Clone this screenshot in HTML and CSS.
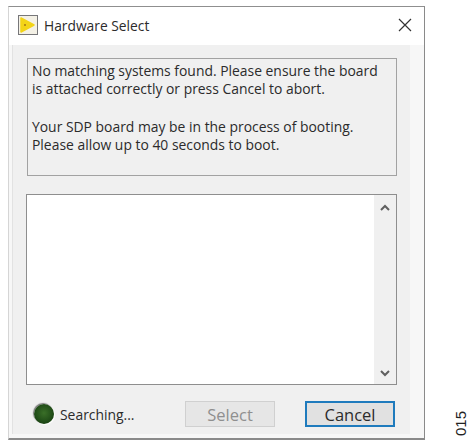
FILE: index.html
```html
<!DOCTYPE html>
<html lang="en">
  <head>
    <meta charset="UTF-8" />
    <title>Hardware Select</title>
    <link rel="stylesheet" href="styles.css">
  </head>
  <body>
    <div class="dialog">
      <div class="titlebar">
        <span class="app-icon">
          <svg width="20" height="20" viewBox="0 0 20 20">
            <rect x="0.5" y="0.5" width="19" height="19" fill="#f4f1e6" stroke="#77777a" />
            <path d="M3 3 L16 10 L3 17 Z" fill="#f3d417" stroke="#f3d417" stroke-linejoin="round" stroke-width="1.5" />
            <circle cx="7" cy="10" r="1" fill="#a5761a" />
          </svg>
        </span>
        <span class="title">Hardware Select</span>
        <svg class="close" width="14" height="14" viewBox="0 0 14 14">
          <path d="M1 1 L13 13 M13 1 L1 13" stroke="#333" stroke-width="1.2" fill="none" />
        </svg>
      </div>
      <div class="content">
        <div class="panel">
          <div class="message">
            <p>No matching systems found. Please ensure the board<br>is attached correctly or press Cancel to abort.</p>
            <p>Your SDP board may be in the process of booting.<br>Please allow up to 40 seconds to boot.</p>
          </div>
          <div class="listbox">
            <div class="list-items"></div>
            <div class="scrollbar">
              <svg width="10" height="8" viewBox="0 0 10 8">
                <path d="M1 6 L5 2 L9 6" stroke="#5f5f5f" stroke-width="2" fill="none" />
              </svg>
              <svg width="10" height="8" viewBox="0 0 10 8">
                <path d="M1 2 L5 6 L9 2" stroke="#5f5f5f" stroke-width="2" fill="none" />
              </svg>
            </div>
          </div>
          <div class="footer">
            <div class="status">
              <span class="led"></span>
              <span>Searching...</span>
            </div>
            <button class="btn" disabled>Select</button>
            <button class="btn btn-default">Cancel</button>
          </div>
        </div>
      </div>
    </div>
    <div class="figure-no">015</div>
  </body>
</html>
```

FILE: styles.css
```css
html,
body {
  margin: 0;
  height: 100%;
  background-color: #fff;
}
body {
  width: 472px;
  height: 445px;
  padding: 6px 0 0 8px;
  box-sizing: border-box;
  display: flex;
  align-items: flex-start;
  overflow: hidden;
  font-family: "Open Sans", sans-serif;
  font-size: 13.9px;
  color: #2b2b2b;
}
.dialog {
  width: 417px;
  height: 434px;
  box-sizing: border-box;
  border: 1px solid #8a8a8a;
  border-bottom-width: 2px;
  border-left-color: #d5d5d5;
  border-top-color: #8f8f8f;
  display: flex;
  flex-direction: column;
}
.titlebar {
  height: 38px;
  flex-shrink: 0;
  box-sizing: border-box;
  display: flex;
  align-items: center;
  padding: 0 12px 3px 9px;
}
.app-icon {
  width: 20px;
  height: 20px;
  margin-right: 6px;
}
.title {
  flex: 1;
  font-size: 13.8px;
  padding-top: 2px;
}
.content {
  flex: 1;
  min-width: 0;
  padding: 0 14px 4px 3px;
  background-color: #f7f7f7;
  display: flex;
}
.panel {
  flex: 1;
  min-width: 0;
  background-color: #f0f0f0;
  border-left: 1px solid #e2e2e2;
  padding: 13px 13px 0 13px;
  display: flex;
  flex-direction: column;
}
.message {
  margin-left: 1px;
  height: 118px;
  box-sizing: border-box;
  border: 1px solid #a2a2a2;
  padding: 3px 4px;
  line-height: 18px;
}
.message p {
  margin: 0 0 20px;
}
.listbox {
  margin-top: 18px;
  height: 191px;
  box-sizing: border-box;
  border: 1px solid #8e8e8e;
  background-color: #fff;
  display: flex;
}
.list-items {
  flex: 1;
}
.scrollbar {
  width: 22px;
  background-color: #f0f0f0;
  display: flex;
  flex-direction: column;
  justify-content: space-between;
  align-items: center;
  padding: 9px 0 7px;
  box-sizing: border-box;
}
.footer {
  margin-top: 16px;
  height: 26px;
  display: flex;
  align-items: center;
}
.status {
  width: 159px;
  box-sizing: border-box;
  display: flex;
  align-items: center;
  gap: 6px;
  padding-left: 8px;
}
.led {
  width: 20px;
  height: 20px;
  border-radius: 50%;
  background: radial-gradient(circle at 50% 45%, #3a6f28 0%, #24521a 50%, #0f320a 100%);
  box-shadow: 1px 1px 1px #fff, -1px -1px 1px #777;
}
.btn {
  width: 90px;
  height: 26px;
  box-sizing: border-box;
  font-family: "Open Sans", sans-serif;
  font-size: 16.5px;
  padding: 0;
  border: 1px solid #adadad;
  background-color: #e1e1e1;
  color: #2b2b2b;
}
.btn:disabled {
  background-color: #e6e6e6;
  border-color: #d0d0d0;
  color: #8f8f8f;
}
.btn-default {
  margin-left: 30px;
  border: 2px solid #1f7bbd;
}
.figure-no {
  position: absolute;
  left: 453px;
  top: 411px;
  writing-mode: vertical-rl;
  transform: rotate(180deg);
  font-family: "Liberation Sans", sans-serif;
  font-size: 15px;
  line-height: 16px;
  color: #222;
}
```
